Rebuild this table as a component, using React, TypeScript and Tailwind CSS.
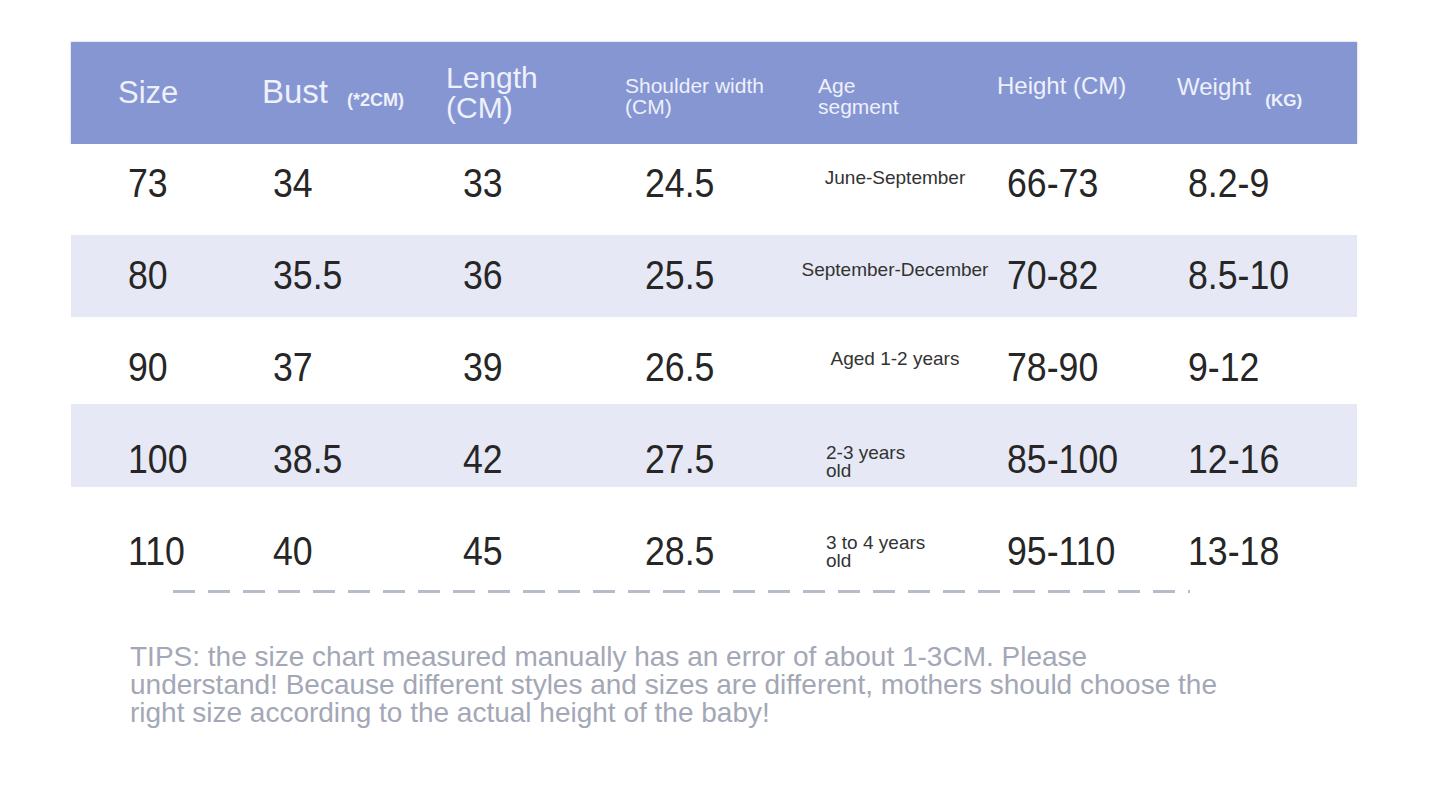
import React from "react";

type Row = {
  vals: string[];
  age: string;
  wrap: boolean;
  h: string;
  pt: string;
  agePt: string;
  bg: string;
};

const rows: Row[] = [
  { vals: ["73", "34", "33", "24.5", "66-73", "8.2-9"], age: "June-September", wrap: false, h: "h-[91px]", pt: "pt-[19px]", agePt: "pt-[25px]", bg: "bg-white" },
  { vals: ["80", "35.5", "36", "25.5", "70-82", "8.5-10"], age: "September-December", wrap: false, h: "h-[82px]", pt: "pt-[20px]", agePt: "pt-[26px]", bg: "bg-[#e6e9f5]" },
  { vals: ["90", "37", "39", "26.5", "78-90", "9-12"], age: "Aged 1-2 years", wrap: false, h: "h-[87px]", pt: "pt-[30px]", agePt: "pt-[33px]", bg: "bg-white" },
  { vals: ["100", "38.5", "42", "27.5", "85-100", "12-16"], age: "2-3 years old", wrap: true, h: "h-[83px]", pt: "pt-[35px]", agePt: "pt-[40px]", bg: "bg-[#e6e9f5]" },
  { vals: ["110", "40", "45", "28.5", "95-110", "13-18"], age: "3 to 4 years old", wrap: true, h: "h-[101px]", pt: "pt-[44px]", agePt: "pt-[47px]", bg: "bg-white" },
];

function Num({ v, cls, pt }: { v: string; cls: string; pt: string }) {
  return (
    <div className={`${cls} ${pt}`}>
      <div className="inline-block origin-left scale-x-[0.87] text-[41px] leading-[40px] text-[#262626] whitespace-nowrap">
        {v}
      </div>
    </div>
  );
}

export default function App() {
  return (
    <div className="w-[1433px] h-[800px] bg-white font-['Liberation_Sans',Arial,sans-serif] overflow-hidden">
      <div className="pt-[42px] pl-[71px]">
        <div className="w-[1286px]">
          {/* header */}
          <div className="flex h-[102px] bg-[#8596d2] text-[#eef0fb] shadow-[0_0_2px_rgba(120,130,180,0.5)]">
            <div className="w-[191px] pl-[47px] pt-[35px]">
              <div className="text-[31px] leading-[31px]">Size</div>
            </div>
            <div className="w-[184px] flex items-start pt-[34px]">
              <div className="text-[33px] leading-[32px]">Bust</div>
              <div className="ml-[19px] mt-[16px] text-[18px] leading-[17px] font-bold whitespace-nowrap">
                (*2CM)
              </div>
            </div>
            <div className="w-[179px] pt-[21px]">
              <div className="text-[30px] leading-[30px]">
                Length
                <br />
                (CM)
              </div>
            </div>
            <div className="w-[172px] pt-[33px]">
              <div className="text-[21px] leading-[21px] whitespace-nowrap">
                Shoulder width
                <br />
                (CM)
              </div>
            </div>
            <div className="w-[200px] pl-[21px] pt-[33px]">
              <div className="text-[21px] leading-[21px]">
                Age
                <br />
                segment
              </div>
            </div>
            <div className="w-[180px] pt-[32px]">
              <div className="text-[24px] leading-[24px]">Height (CM)</div>
            </div>
            <div className="w-[180px] flex items-start pt-[33px]">
              <div className="text-[24px] leading-[24px]">Weight</div>
              <div className="ml-[14px] mt-[17px] text-[17px] leading-[17px] font-bold">(KG)</div>
            </div>
          </div>

          {/* body rows */}
          {rows.map((r, i) => (
            <div key={i} className={`flex ${r.h} ${r.bg}`}>
              <Num v={r.vals[0]} cls="w-[191px] pl-[57px]" pt={r.pt} />
              <Num v={r.vals[1]} cls="w-[184px] pl-[11px]" pt={r.pt} />
              <Num v={r.vals[2]} cls="w-[179px] pl-[17px]" pt={r.pt} />
              <Num v={r.vals[3]} cls="w-[172px] pl-[20px]" pt={r.pt} />
              <div className={`w-[200px] ${r.agePt}`}>
                {r.wrap ? (
                  <div className="ml-[29px] w-[104px] text-[19px] leading-[18px] text-[#333333]">{r.age}</div>
                ) : (
                  <div className="pr-[4px] text-center text-[19px] leading-[18px] text-[#333333] whitespace-nowrap">{r.age}</div>
                )}
              </div>
              <Num v={r.vals[4]} cls="w-[180px] pl-[10px]" pt={r.pt} />
              <Num v={r.vals[5]} cls="w-[180px] pl-[11px]" pt={r.pt} />
            </div>
          ))}
        </div>

        {/* dashed divider */}
        <div className="ml-[102px] mt-[2px] w-[1017px] h-[3px] bg-[repeating-linear-gradient(90deg,#b7bccb_0px,#b7bccb_22px,transparent_22px,transparent_35px)]" />

        {/* tips */}
        <div className="ml-[59px] mt-[50px] text-[28px] leading-[28px] text-[#a3a7b6] whitespace-nowrap">
          TIPS: the size chart measured manually has an error of about 1-3CM. Please
          <br />
          understand! Because different styles and sizes are different, mothers should choose the
          <br />
          right size according to the actual height of the baby!
        </div>
      </div>
    </div>
  );
}
